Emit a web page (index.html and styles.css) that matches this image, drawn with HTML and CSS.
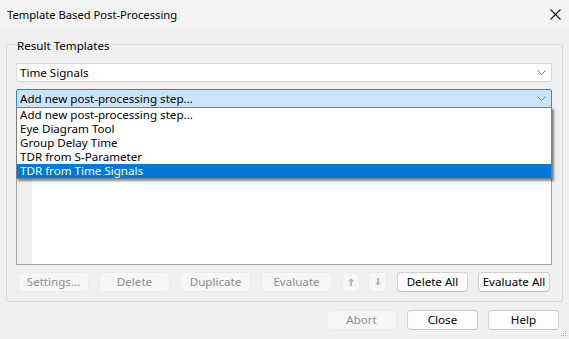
FILE: index.html
```html
<!DOCTYPE html>
<html lang="en">
<head>
  <meta charset="UTF-8" />
  <title>Template Based Post-Processing</title>
  <link rel="stylesheet" href="styles.css">
</head>
<body>
  <div class="titlebar">
    <span class="title">Template Based Post-Processing</span>
    <svg class="close" viewBox="0 0 11 11"><path d="M0.5 0.5L10.5 10.5M10.5 0.5L0.5 10.5"/></svg>
  </div>

  <div class="group">
    <span class="group-label">Result Templates</span>

    <div class="combo">
      <span>Time Signals</span>
      <svg class="chevron" viewBox="0 0 9 5"><path d="M0.5 0.5L4.5 4.5L8.5 0.5"/></svg>
    </div>

    <div class="combo-wrap">
      <div class="combo focus">
        <span>Add new post-processing step...</span>
        <svg class="chevron" viewBox="0 0 9 5"><path d="M0.5 0.5L4.5 4.5L8.5 0.5"/></svg>
      </div>
      <ul class="dropdown">
        <li>Add new post-processing step...</li>
        <li>Eye Diagram Tool</li>
        <li>Group Delay Time</li>
        <li>TDR from S-Parameter</li>
        <li class="selected">TDR from Time Signals</li>
      </ul>
    </div>

    <div class="listbox">
      <div class="gutter"></div>
    </div>

    <div class="btn-row">
      <button class="btn" disabled>Settings...</button>
      <button class="btn" disabled>Delete</button>
      <button class="btn" disabled>Duplicate</button>
      <button class="btn" disabled>Evaluate</button>
      <button class="btn small" disabled>
        <svg viewBox="0 0 6 8"><path d="M3 0L6 3.5H4V8H2V3.5H0Z"/></svg>
      </button>
      <button class="btn small down" disabled>
        <svg viewBox="0 0 6 8"><path d="M3 8L6 4.5H4V0H2V4.5H0Z"/></svg>
      </button>
      <button class="btn">Delete All</button>
      <button class="btn wide">Evaluate All</button>
    </div>
  </div>

  <div class="footer">
    <button class="btn" disabled>Abort</button>
    <button class="btn">Close</button>
    <button class="btn">Help</button>
  </div>

  <svg class="grip" viewBox="0 0 6 6">
    <rect x="4" y="0" width="1" height="1"/>
    <rect x="2" y="2" width="1" height="1"/><rect x="4" y="2" width="1" height="1"/>
    <rect x="0" y="4" width="1" height="1"/><rect x="2" y="4" width="1" height="1"/><rect x="4" y="4" width="1" height="1"/>
  </svg>
</body>
</html>
```

FILE: styles.css
```css
* {
  box-sizing: border-box;
}
body {
  margin: 0;
  width: 569px;
  height: 339px;
  overflow: hidden;
  position: relative;
  background: #f0f0f0;
  font-family: 'Segoe UI', 'Noto Sans', sans-serif;
  font-size: 11.6px;
  color: #000;
}

.titlebar {
  height: 29px;
  background: #f3f3f3;
  display: flex;
  align-items: center;
  justify-content: space-between;
  padding: 0 8px 0 7px;
  font-size: 11.2px;
}
.close {
  width: 11px;
  height: 11px;
  stroke: #1a1a1a;
  stroke-width: 1.1;
  margin-top: -1px;
}

.group {
  position: relative;
  margin: 15px 6px 0 6px;
  padding: 18px 10px 9px 9px;
  border: 1px solid #dcdcdc;
  border-radius: 2px;
}
.group-label {
  position: absolute;
  top: -7px;
  left: 8px;
  padding: 0 2px;
  line-height: 16px;
  background: #f0f0f0;
}

.combo {
  height: 19px;
  background: #fff;
  border: 1px solid #d9d9d9;
  border-radius: 2px;
  display: flex;
  align-items: center;
  justify-content: space-between;
  padding: 0 5px 0 3px;
  line-height: 16px;
}
.combo.focus {
  background: #cce4f7;
  border-color: #2f88d6;
}
.chevron {
  width: 9px;
  height: 5px;
  fill: none;
  stroke: #7a7a7a;
  stroke-width: 1;
}

.combo-wrap {
  position: relative;
  margin-top: 7px;
}
.dropdown {
  position: absolute;
  top: 18px;
  left: 0;
  right: 0;
  margin: 0;
  padding: 0;
  list-style: none;
  background: #fff;
  border: 1px solid #7d7d7d;
  box-shadow: 2px 2px 2px rgba(0, 0, 0, 0.45);
  z-index: 2;
}
.dropdown li {
  height: 14px;
  line-height: 14px;
  padding-left: 3px;
  white-space: nowrap;
}
.dropdown li.selected {
  background: #0078d7;
  color: #fff;
}

.listbox {
  margin-top: 7px;
  height: 150px;
  background: #fff;
  border: 1px solid #a0a0a0;
  display: flex;
}
.gutter {
  width: 15px;
  background: #f0f0f0;
}

.btn-row {
  display: flex;
  gap: 10px;
  margin-top: 7px;
  padding-left: 2px;
}
.btn-row .small + .small {
  margin-left: -2px;
}
.btn {
  width: 71px;
  height: 20px;
  padding: 0;
  font-family: inherit;
  font-size: 11.6px;
  line-height: 16px;
  color: #000;
  background: #fdfdfd;
  border: 1px solid #d0d0d0;
  border-bottom-color: #bfbfbf;
  border-radius: 4px;
}
.btn:disabled {
  color: #8d8d8d;
  background: #f6f6f6;
  border-color: #ececec;
}
.btn.wide {
  width: 72px;
}
.btn.small {
  width: 18px;
  display: flex;
  align-items: center;
  justify-content: center;
}
.btn.small.down {
  width: 19px;
}
.btn.small svg {
  width: 6px;
  height: 8px;
  fill: #b9b9b9;
}

.footer {
  display: flex;
  justify-content: flex-end;
  gap: 10px;
  margin-top: 8px;
  padding-right: 10px;
}

.grip {
  position: absolute;
  right: 2px;
  bottom: 2px;
  width: 6px;
  height: 6px;
  fill: #a8a8a8;
}
```
